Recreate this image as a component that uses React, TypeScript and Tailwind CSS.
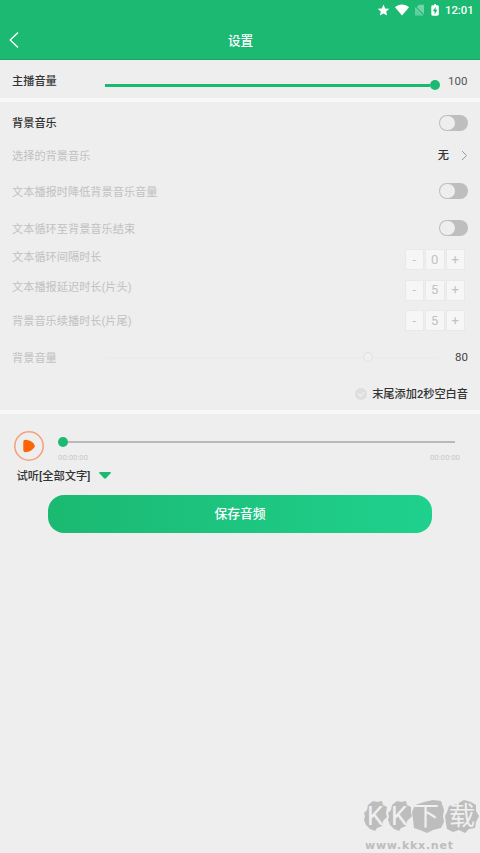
import type { ReactNode } from 'react'

function Switch() {
  return (
    <div className="flex h-4 w-[29px] items-center rounded-full bg-[#bebebe] p-px">
      <div className="h-3.5 w-[15px] rounded-full bg-[#eeeeee]" />
    </div>
  )
}

function Stepper({ value }: { value: number }) {
  return (
    <div className="flex gap-px text-[13px] leading-5 text-[#c2c2c2]">
      {['-', value, '+'].map((item, i) => (
        <div key={i} className="flex h-[21px] w-[19.5px] items-center justify-center border border-[#e9e9e9] bg-[#f6f6f6]">
          {item}
        </div>
      ))}
    </div>
  )
}

function Row({ label, className, children }: { label: string; className: string; children?: ReactNode }) {
  return (
    <div className={`flex items-center justify-between pl-3 ${className}`}>
      <span className="pt-[3px] text-[11.2px] leading-4 text-[#c1c1c1]">{label}</span>
      {children}
    </div>
  )
}

function StatusBar() {
  return (
    <div className="flex h-5 items-center pl-[377px] text-white">
      <svg width="62" height="20" viewBox="0 0 62 20" fill="white">
        <path d="M6.5 4.5 8.2 8.4l4.1.4-3.1 2.8.9 4-3.6-2.1-3.6 2.1.9-4L.7 8.8l4.1-.4z" />
        <path d="M18 7.3c4-3.6 10-3.6 14 0L25 15.5z" />
        <path d="M47 4.8v10.6h-1.4L38.4 8.2 42 4.8z" opacity=".38" />
        <path d="M37.5 5.5 47 15.5H38V8.2" opacity=".3" />
        <path d="m37.2 5.4 10.2 10.4" stroke="#1bb972" strokeWidth="1.3" />
        <path d="M57 4.2h2v1h1q1.8 0 1.8 1.4v7.7q0 1.4-1.6 1.4h-4.6q-1.3 0-1.3-1.4V6.6q0-1.4 1.3-1.4H57z" />
        <path d="m58.8 6.8-3 4.5h1.8v3.2l2.8-4.7h-1.8z" fill="#1bb972" />
      </svg>
      <span className="ml-[6px] pt-0.5 text-[11.3px] font-medium leading-5">12:01</span>
    </div>
  )
}

function Watermark() {
  return (
    <div className="relative mt-auto ml-[360px] h-[58px] w-[120px]">
      <svg width="120" height="58" viewBox="0 0 120 58" className="absolute inset-0" fill="#bdbdbd">
        <path d="m8 10 5-4 4 1 5-1 1 4 4 2-1 6 1 4-4 4-1 5-5 2-2 3-5-2-4-4-2-5 1-4-1-3 3-3z" />
        <path d="m32 10 5-4 4 1 5-1 1 4 4 2v6l1 3-5 5-1 5-5 2-2 3-5-2-4-4-2-5 1-4-1-3 3-3z" />
        <path d="m55 10 9-3 9-2 8 1 3 9-1 6 1 6-3 6-8 2-6 3-7-3-6-2-1-9-1-7z" />
        <path d="m89 11 8-2 7-4 7 2 5 3v6l3 5-3 6-1 6-6 1-4 4-6-3-6 2-6-3-1-5-1-8 2-4z" />
      </svg>
      <div className="absolute left-[7px] top-[5px] flex text-[26px] leading-[32px] text-[#f0f0f0]">
        <span className="w-6">K</span>
        <span className="w-[22px]">K</span>
        <span className="w-[36px]">下</span>
        <span>载</span>
      </div>
      <span className="absolute left-[5px] top-[43px] font-['DejaVu_Sans'] text-[11px] font-bold leading-[16px] tracking-[0.75px] text-[#bdbdbd]">
        www.kkx.net
      </span>
    </div>
  )
}

export default function App() {
  return (
    <div className="flex h-[853px] w-[480px] flex-col overflow-hidden bg-[#eeeeee] font-[Roboto,'Noto_Sans_CJK_SC',sans-serif] text-[#333333]">
      <header className="h-[60px] shrink-0 border-b border-[#18a768] bg-[#1bb972]">
        <StatusBar />
        <div className="flex h-10 items-center pl-[9px] text-white">
          <svg width="10" height="18" viewBox="0 0 10 18" fill="none" stroke="white" strokeWidth="1.3">
            <path d="M9 1.5 1.2 9 9 16.5" />
          </svg>
          <h1 className="ml-[209px] pt-0.5 text-[12.6px] font-medium leading-5">设置</h1>
        </div>
      </header>

      <section className="flex h-[42px] shrink-0 items-center border-b-4 border-[#f7f7f7] pl-3 pt-1">
        <span className="w-[93px] pt-0.5 text-[11.2px] font-medium leading-4">主播音量</span>
        <div className="mt-2 flex h-2.5 w-[335px] items-center">
          <div className="h-[3px] flex-1 bg-[#1bb972]" />
          <div className="size-2.5 rounded-full bg-[#1bb972]" />
        </div>
        <span className="ml-2 text-[11.5px] leading-4 text-[#555555]">100</span>
      </section>

      <section className="h-[312px] shrink-0 border-b-4 border-[#f7f7f7]">
        <div className="flex h-[41px] items-center justify-between pl-3 pr-3">
          <span className="pt-[3px] text-[11.2px] font-medium leading-4">背景音乐</span>
          <Switch />
        </div>
        <Row label="选择的背景音乐" className="h-6 pr-3">
          <div className="flex items-center">
            <span className="pt-0.5 text-[11.2px] font-medium leading-4">无</span>
            <svg className="ml-3" width="7" height="11" viewBox="0 0 7 11" fill="none" stroke="#999999">
              <path d="m1 1 4.5 4.5L1 10" />
            </svg>
          </div>
        </Row>
        <Row label="文本播报时降低背景音乐音量" className="h-12 pr-3">
          <Switch />
        </Row>
        <Row label="文本循环至背景音乐结束" className="h-[26px] pr-3">
          <Switch />
        </Row>
        <div className="flex h-24 justify-between pl-3 pr-[15px] pt-2">
          <div className="pt-px text-[11.2px] leading-4 text-[#c1c1c1]">
            <div className="h-[30px]">文本循环间隔时长</div>
            <div className="h-[34px]">文本播报延迟时长(片头)</div>
            <div>背景音乐续播时长(片尾)</div>
          </div>
          <div className="flex flex-col gap-[9.5px]">
            <Stepper value={0} />
            <Stepper value={5} />
            <Stepper value={5} />
          </div>
        </div>
        <Row label="背景音量" className="h-[38px] pr-3 pt-0.5">
          <div className="ml-[49px] flex flex-1 items-center">
            <div className="h-px w-[257px] bg-[#e9e9e9]" />
            <div className="size-2.5 rounded-full border-[1.5px] border-[#e0e0e0] bg-[#f0f0f0]" />
            <div className="h-px w-16 bg-[#e9e9e9]" />
          </div>
          <span className="text-[11.5px] leading-4 text-[#444444]">80</span>
        </Row>
        <div className="flex h-[35px] items-center justify-end pr-3 pt-[3px]">
          <svg width="12" height="12" viewBox="0 0 12 12" fill="none">
            <circle cx="6" cy="6" r="6" fill="#dedede" />
            <path d="m3.2 6 2.1 2.1 3.8-3.8" stroke="#f1f1f1" strokeWidth="1.2" />
          </svg>
          <span className="ml-[5px] pt-0.5 text-[11.2px] font-medium leading-4">末尾添加2秒空白音</span>
        </div>
      </section>

      <section className="h-[119px] shrink-0 pt-[17px]">
        <div className="flex pl-3.5">
          <svg width="30" height="30" viewBox="0 0 30 30" fill="none">
            <circle cx="15" cy="15" r="14.2" stroke="#f5a27c" strokeWidth="1.6" />
            <path d="M9.3 11q0-2.5 2.6-2.3 5 .3 8.2 4.2 1.6 2 0 3.9-3.2 4.2-8.2 4.5-2.6.2-2.6-2.3z" fill="#fd6507" />
          </svg>
          <div className="ml-3.5 mt-1.5 w-[402px]">
            <div className="flex h-2.5 w-[397px] items-center">
              <div className="size-2.5 rounded-full bg-[#1bb972]" />
              <div className="h-[1.5px] flex-1 bg-[#b9b9b9]" />
            </div>
            <div className="mt-1 flex justify-between pt-px text-[7.8px] leading-3 text-[#c9c9c9]">
              <span>00:00:00</span>
              <span>00:00:00</span>
            </div>
          </div>
        </div>
        <div className="flex h-6 items-center pl-[16.5px]">
          <span className="pt-px text-[11.3px] font-medium leading-4">试听[全部文字]</span>
          <svg className="mb-px ml-[9px]" width="12" height="7" viewBox="0 0 12 7" fill="#1bb972">
            <path d="M1 0h10q1.4.3.6 1.2L7 6.2q-1 .9-2 0L.4 1.2Q-.4.3 1 0" />
          </svg>
        </div>
      </section>

      <button className="mx-12 -mt-[38px] h-[38px] shrink-0 rounded-2xl bg-linear-to-r from-[#1bb972] to-[#1fd18d] text-[12.8px] font-medium text-white">
        保存音频
      </button>

      <Watermark />
    </div>
  )
}
